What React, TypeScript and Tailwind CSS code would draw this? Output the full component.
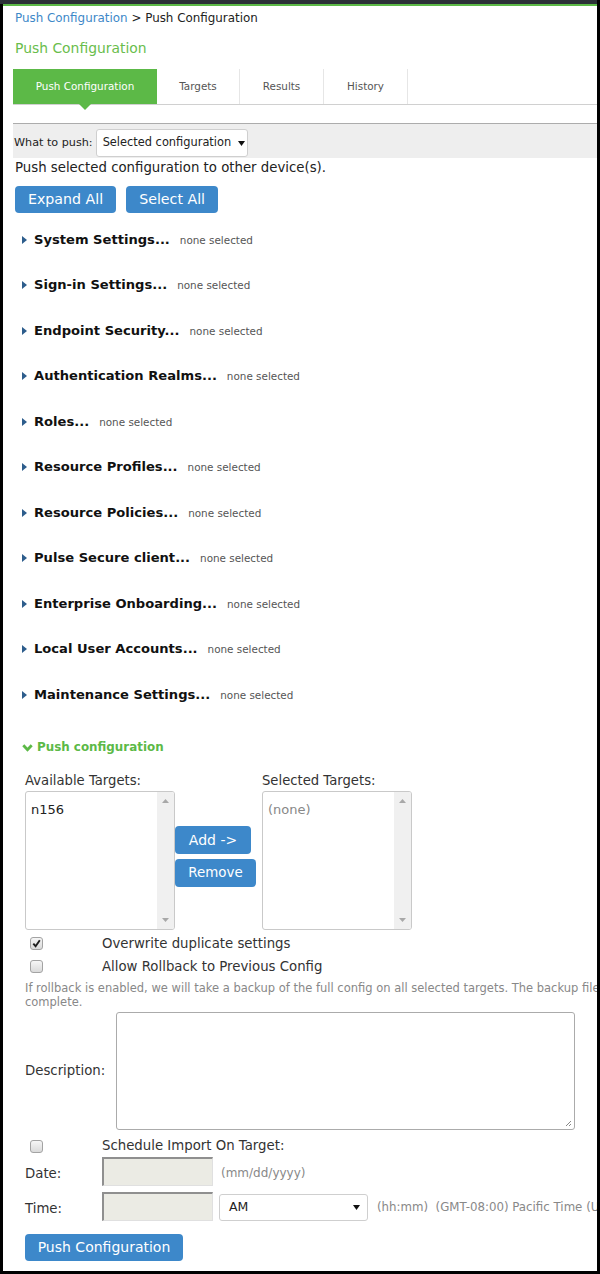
import React from "react";

const items = [
  "System Settings...",
  "Sign-in Settings...",
  "Endpoint Security...",
  "Authentication Realms...",
  "Roles...",
  "Resource Profiles...",
  "Resource Policies...",
  "Pulse Secure client...",
  "Enterprise Onboarding...",
  "Local User Accounts...",
  "Maintenance Settings...",
];

function Check({ checked }: { checked?: boolean }) {
  return (
    <div className="w-[13px] h-[13px] rounded-[3px] border border-[#a3a3a3] bg-linear-to-b from-[#f6f6f6] to-[#dadada] flex items-center justify-center">
      {checked && (
        <svg width="9" height="9" viewBox="0 0 9 9">
          <path d="M1.3 4.6 L3.6 7.2 L7.8 1.2" stroke="#1e1e1e" strokeWidth="1.9" fill="none" />
        </svg>
      )}
    </div>
  );
}

function ListBox({ children }: { children: React.ReactNode }) {
  return (
    <div className="w-[150px] h-[139px] border border-[#c9c9c9] rounded-[3px] flex overflow-hidden bg-white">
      <div className="flex-1 pl-[5px] pt-[9px] text-[13px] leading-[18px]">{children}</div>
      <div className="w-[17px] bg-[#f0f0f0] flex flex-col justify-between items-center pt-[7px] pb-[7px]">
        <svg width="7" height="4" viewBox="0 0 7 4">
          <path d="M0 4 L3.5 0 L7 4 Z" fill="#a8a8a8" />
        </svg>
        <svg width="7" height="4" viewBox="0 0 7 4">
          <path d="M0 0 L3.5 4 L7 0 Z" fill="#a8a8a8" />
        </svg>
      </div>
    </div>
  );
}

function Caret() {
  return (
    <svg width="7" height="5" viewBox="0 0 7 5">
      <path d="M0 0 L7 0 L3.5 5 Z" fill="#111" />
    </svg>
  );
}

export default function App() {
  return (
    <div className="w-[600px] h-[1274px] bg-black font-['DejaVu_Sans',sans-serif] text-[#333]">
      <div className="w-[597px] h-[4px] bg-[#2b3037]" />
      <div className="ml-[3px] w-[594px] h-[2px] bg-[#5cb947]" />
      <div className="ml-[3px] w-[594px] h-[1265px] bg-white overflow-hidden">
        <div className="w-[700px] pl-[10px]">
          {/* breadcrumb */}
          <div className="mt-[4px] h-[16px] pl-[2px] text-[11.9px] leading-[16px] whitespace-nowrap">
            <span className="text-[#3d88c8]">Push Configuration</span>
            <span className="text-[#222]"> &gt; Push Configuration</span>
          </div>
          {/* title */}
          <div className="mt-[11px] h-[22px] pl-[2px] text-[13.9px] leading-[22px] text-[#69bd4c]">Push Configuration</div>
          {/* tabs */}
          <div className="mt-[10px] w-[584px] border-b border-[#d0d0d0] relative">
            <div className="flex h-[35px] text-[10.4px]">
              <div className="w-[144px] bg-[#5cb947] text-white flex items-center justify-center">Push Configuration</div>
              <div className="w-[83px] border-r border-[#e6e6e6] text-[#555] flex items-center justify-center">Targets</div>
              <div className="w-[84px] border-r border-[#e6e6e6] text-[#555] flex items-center justify-center">Results</div>
              <div className="w-[84px] border-r border-[#e6e6e6] text-[#555] flex items-center justify-center">History</div>
            </div>
            <div className="absolute left-[66px] top-[35px] w-0 h-0 border-l-[6px] border-r-[6px] border-t-[6px] border-l-transparent border-r-transparent border-t-[#5cb947]" />
          </div>
          {/* what to push bar */}
          <div className="mt-[18px] w-[584px] h-[35px] border-t border-[#acacac] bg-[#eeeeee] flex items-center pt-[4px] pl-[1px]">
            <span className="text-[11.2px] text-[#222]">What to push:</span>
            <div className="ml-[3px] w-[152px] h-[28px] bg-white border border-[#cfcfcf] rounded-[3px] flex items-center pl-[6px] gap-[7px]">
              <span className="text-[11.4px] text-[#222]">Selected configuration</span>
              <Caret />
            </div>
          </div>
          <div className="mt-[2px] h-[16px] pl-[2px] text-[13.3px] leading-[16px] text-[#222] whitespace-nowrap">
            Push selected configuration to other device(s).
          </div>
          {/* buttons */}
          <div className="mt-[10px] pl-[2px] flex gap-[10px]">
            <div className="h-[27px] px-[13px] rounded-[4px] bg-[#3d88ca] text-white text-[14.2px] flex items-center">Expand All</div>
            <div className="h-[27px] px-[13px] rounded-[4px] bg-[#3d88ca] text-white text-[14.2px] flex items-center">Select All</div>
          </div>
          {/* accordion */}
          <div className="mt-[4px]">
            {items.map((t) => (
              <div key={t} className="h-[45.5px] flex items-center pl-[9px]">
                <svg width="5" height="8" viewBox="0 0 5 8">
                  <path d="M0 0 L5 4 L0 8 Z" fill="#2d5d8c" />
                </svg>
                <span className="ml-[7px] font-bold text-[13.1px] text-[#111] leading-[16px]">{t}</span>
                <span className="ml-[10px] text-[10.4px] text-[#555] leading-[16px]">none selected</span>
              </div>
            ))}
          </div>
          {/* push configuration header */}
          <div className="mt-[22px] h-[16px] pl-[9px] flex items-center">
            <svg width="11" height="8" viewBox="0 0 11 8">
              <path d="M1.3 1.3 L5.5 5.8 L9.7 1.3" stroke="#5cb947" strokeWidth="2.8" fill="none" />
            </svg>
            <span className="ml-[4px] font-bold text-[11.9px] text-[#5cb947]">Push configuration</span>
          </div>
          {/* targets */}
          <div className="mt-[17.5px] pl-[12px] flex h-[16px] text-[13.2px] leading-[16px] text-[#333]">
            <div className="w-[237px]">Available Targets:</div>
            <div>Selected Targets:</div>
          </div>
          <div className="mt-[2px] pl-[12px] flex">
            <ListBox>
              <span className="text-[#222]">n156</span>
            </ListBox>
            <div className="w-[87px] pt-[35px] flex flex-col gap-[5px] items-start">
              <div className="h-[28px] w-[76px] rounded-[4px] bg-[#3d88ca] text-white text-[14px] flex items-center justify-center">Add -&gt;</div>
              <div className="h-[28px] w-[81px] rounded-[4px] bg-[#3d88ca] text-white text-[13.4px] flex items-center justify-center">Remove</div>
            </div>
            <ListBox>
              <span className="text-[#888]">(none)</span>
            </ListBox>
          </div>
          {/* checkboxes */}
          <div className="mt-[2px]">
            <div className="h-[23px] flex items-center">
              <div className="w-[89px] pl-[17px]">
                <Check checked />
              </div>
              <span className="text-[13.3px] text-[#333]">Overwrite duplicate settings</span>
            </div>
            <div className="h-[23px] flex items-center">
              <div className="w-[89px] pl-[17px]">
                <Check />
              </div>
              <span className="text-[13.3px] text-[#333]">Allow Rollback to Previous Config</span>
            </div>
          </div>
          <div className="mt-[3px] pl-[12px] text-[11.5px] leading-[14px] text-[#888]">
            <div className="whitespace-nowrap">
              If rollback is enabled, we will take a backup of the full config on all selected targets. The backup file
            </div>
            <div>complete.</div>
          </div>
          {/* description */}
          <div className="mt-[3px] pl-[12px] flex items-center">
            <div className="w-[91px] text-[13.3px] text-[#333]">Description:</div>
            <div className="w-[459px] h-[118px] border border-[#ababab] rounded-[3px] relative bg-white">
              <svg className="absolute right-[2px] bottom-[2px]" width="8" height="8" viewBox="0 0 8 8">
                <path d="M7 2 L2 7 M7 5 L5 7" stroke="#888" strokeWidth="1" />
              </svg>
            </div>
          </div>
          {/* schedule */}
          <div className="mt-[5px] h-[22px] flex items-center">
            <div className="w-[89px] pl-[17px]">
              <Check />
            </div>
            <span className="text-[13.3px] text-[#333]">Schedule Import On Target:</span>
          </div>
          <div className="h-[29px] pl-[12px] flex items-center">
            <div className="w-[77px] text-[13.3px] text-[#333] pt-[4px]">Date:</div>
            <div className="w-[111px] h-[29px] bg-[#ebebe4] border-t-2 border-l-2 border-t-[#8f8f8f] border-l-[#8f8f8f] border-b border-r border-b-[#e0e0e0] border-r-[#e0e0e0]" />
            <span className="ml-[8px] text-[12px] text-[#888] pt-[3px]">(mm/dd/yyyy)</span>
          </div>
          <div className="mt-[6px] h-[29px] pl-[12px] flex items-center">
            <div className="w-[77px] text-[13.3px] text-[#333] pt-[4px]">Time:</div>
            <div className="w-[111px] h-[29px] bg-[#ebebe4] border-t-2 border-l-2 border-t-[#8f8f8f] border-l-[#8f8f8f] border-b border-r border-b-[#e0e0e0] border-r-[#e0e0e0]" />
            <div className="ml-[6px] mt-[2px] w-[149px] h-[27px] bg-white border border-[#cfcfcf] rounded-[3px] flex items-center justify-between pl-[9px] pr-[7px]">
              <span className="text-[12.5px] text-[#222]">AM</span>
              <Caret />
            </div>
            <span className="ml-[9px] text-[11.8px] text-[#888] pt-[3px] whitespace-nowrap">(hh:mm)&nbsp; (GMT-08:00) Pacific Time (U</span>
          </div>
          <div className="mt-[13px] pl-[12px]">
            <div className="w-[158px] h-[27px] rounded-[4px] bg-[#3d88ca] text-white text-[14px] flex items-center justify-center">Push Configuration</div>
          </div>
        </div>
      </div>
    </div>
  );
}
